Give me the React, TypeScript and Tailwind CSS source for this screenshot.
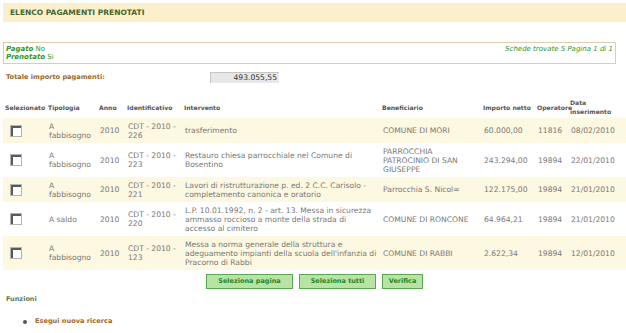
const rows = [
  {
    tipo: ["A", "fabbisogno"],
    id: ["CDT - 2010 -", "226"],
    intervento: ["trasferimento"],
    beneficiario: ["COMUNE DI MORI"],
    importo: "60.000,00",
    operatore: "11816",
    data: "08/02/2010",
  },
  {
    tipo: ["A", "fabbisogno"],
    id: ["CDT - 2010 -", "223"],
    intervento: ["Restauro chiesa parrocchiale nel Comune di", "Bosentino"],
    beneficiario: ["PARROCCHIA", "PATROCINIO DI SAN", "GIUSEPPE"],
    importo: "243.294,00",
    operatore: "19894",
    data: "22/01/2010",
  },
  {
    tipo: ["A", "fabbisogno"],
    id: ["CDT - 2010 -", "221"],
    intervento: ["Lavori di ristrutturazione p. ed. 2 C.C. Carisolo -", "completamento canonica e oratorio"],
    beneficiario: ["Parrocchia S. Nicol="],
    importo: "122.175,00",
    operatore: "19894",
    data: "21/01/2010",
  },
  {
    tipo: ["A saldo"],
    id: ["CDT - 2010 -", "220"],
    intervento: [
      "L.P. 10.01.1992, n. 2 - art. 13. Messa in sicurezza",
      "ammasso roccioso a monte della strada di",
      "accesso al cimitero",
    ],
    beneficiario: ["COMUNE DI RONCONE"],
    importo: "64.964,21",
    operatore: "19894",
    data: "21/01/2010",
  },
  {
    tipo: ["A", "fabbisogno"],
    id: ["CDT - 2010 -", "123"],
    intervento: [
      "Messa a norma generale della struttura e",
      "adeguamento impianti della scuola dell'infanzia di",
      "Pracorno di Rabbi",
    ],
    beneficiario: ["COMUNE DI RABBI"],
    importo: "2.622,34",
    operatore: "19894",
    data: "12/01/2010",
  },
];

const Lines = ({ lines }: { lines: string[] }) => (
  <>
    {lines.map((l) => (
      <div key={l} className="whitespace-nowrap">
        {l}
      </div>
    ))}
  </>
);

const Checkbox = () => (
  <div className="w-[12px] h-[12px] border border-[#b4b4b4] bg-white ml-[4px]">
    <div className="w-full h-full border-t-2 border-l-2 border-[#5a5a5a]" />
  </div>
);

const Button = ({ label, w }: { label: string; w: string }) => (
  <button className={`${w} h-[15px] bg-[#b9e3a4] border border-[#5aa852] text-[#23862a] font-bold text-[6.5px] leading-[13px]`}>
    {label}
  </button>
);

const App = () => {
  return (
    <div
      className="w-[626px] h-[333px] overflow-hidden bg-white pl-[3px] pt-[3px] text-[7.6px] leading-[9px] text-[#777]"
      style={{ fontFamily: '"DejaVu Sans", Verdana, sans-serif' }}
    >
      <div className="h-[19px] bg-[#fcf0cc] flex items-center pl-[7px]">
        <span className="font-bold text-[7.5px] text-[#46662a]">ELENCO PAGAMENTI PRENOTATI</span>
      </div>

      <div className="mt-[20px] mr-[10px] h-[22px] border border-[#dccdae] flex justify-between px-[2px] pt-[2px] text-[7px] leading-[8px] text-[#2e962e]">
        <div>
          <div>
            <span className="font-bold italic">Pagato</span> No
          </div>
          <div>
            <span className="font-bold italic">Prenotato</span> Si
          </div>
        </div>
        <div className="italic">Schede trovate 5 Pagina 1 di 1</div>
      </div>

      <div className="mt-[8px] flex items-center h-[11px]">
        <div className="w-[207px] pl-[3px] font-bold text-[6.6px] text-[#9d6a22]">Totale importo pagamenti:</div>
        <div className="w-[69px] h-[11px] bg-[#e8e8ea] border-t border-l border-[#c4c4c4] text-right pr-[2px] text-[#333] leading-[10px]">
          493.055,55
        </div>
      </div>

      <table className="mt-[13px] table-fixed border-collapse w-[623px]">
        <colgroup>
          <col className="w-[43px]" />
          <col className="w-[51px]" />
          <col className="w-[28px]" />
          <col className="w-[57px]" />
          <col className="w-[198px]" />
          <col className="w-[101px]" />
          <col className="w-[54px]" />
          <col className="w-[33px]" />
          <col className="w-[58px]" />
        </colgroup>
        <thead>
          <tr className="h-[22px] text-left font-bold text-[6.1px] leading-[9px] text-[#555]">
            <th className="px-[2px] whitespace-nowrap">Selezionato</th>
            <th className="px-[2px]">Tipologia</th>
            <th className="px-[2px]">Anno</th>
            <th className="px-[2px]">Identificativo</th>
            <th className="px-[2px]">Intervento</th>
            <th className="px-[2px]">Beneficiario</th>
            <th className="px-[2px] whitespace-nowrap">Importo netto</th>
            <th className="px-[2px]">Operatore</th>
            <th className="px-[2px]">
              Data
              <br />
              inserimento
            </th>
          </tr>
        </thead>
        <tbody>
          {rows.map((r, i) => (
            <tr key={r.id.join()} className={i % 2 === 0 ? "bg-[#fdf8e2]" : "bg-white"}>
              <td className="py-[3.5px] px-[3px] align-middle">
                <Checkbox />
              </td>
              <td className="py-[3.5px] px-[3px]">
                <Lines lines={r.tipo} />
              </td>
              <td className="py-[3.5px] px-[3px]">2010</td>
              <td className="py-[3.5px] px-[3px]">
                <Lines lines={r.id} />
              </td>
              <td className="py-[3.5px] px-[3px]">
                <Lines lines={r.intervento} />
              </td>
              <td className="py-[3.5px] px-[3px]">
                <Lines lines={r.beneficiario} />
              </td>
              <td className="py-[3.5px] px-[3px]">{r.importo}</td>
              <td className="py-[3.5px] px-[3px]">{r.operatore}</td>
              <td className="py-[3.5px] px-[3px]">{r.data}</td>
            </tr>
          ))}
        </tbody>
      </table>

      <div className="mt-[4px] flex justify-center gap-[6px]">
        <Button label="Seleziona pagina" w="w-[87px]" />
        <Button label="Seleziona tutti" w="w-[77px]" />
        <Button label="Verifica" w="w-[41px]" />
      </div>

      <div className="mt-[6px] pl-[3px] font-bold text-[6.5px] text-[#5b7b55]">Funzioni</div>
      <ul className="mt-[13px] pl-[20px] flex items-center gap-[8px]">
        <li className="w-[4px] h-[4px] rounded-full bg-[#555]" />
        <li className="font-bold text-[6.6px] text-[#a0692a]">Esegui nuova ricerca</li>
      </ul>
    </div>
  );
};

export default App;
